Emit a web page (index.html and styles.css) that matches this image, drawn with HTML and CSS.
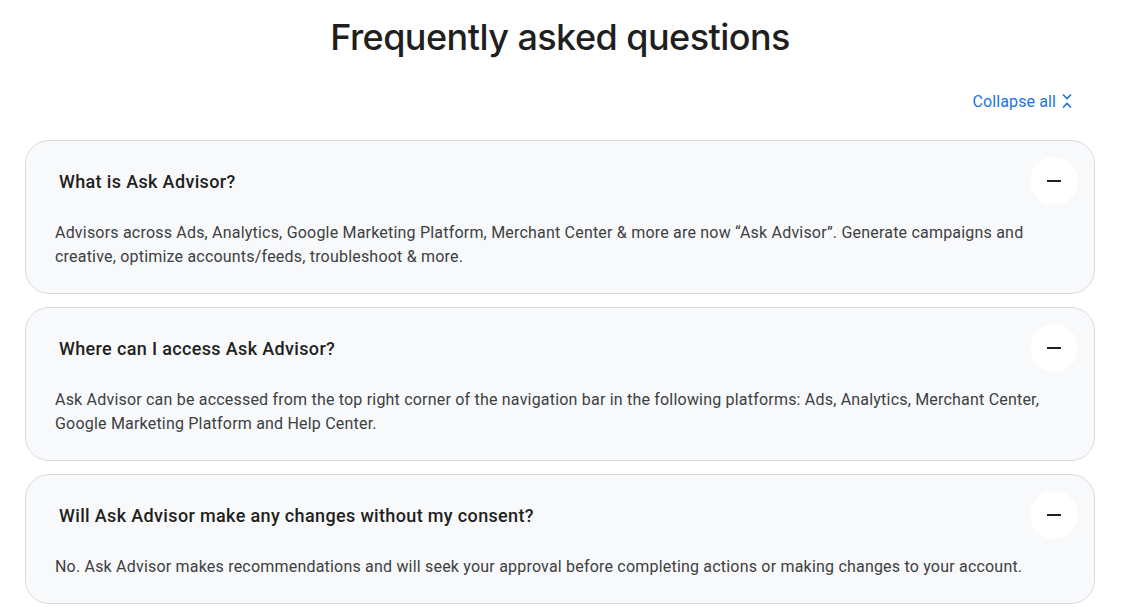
FILE: index.html
```html
<!DOCTYPE html>
<html lang="en">
<head>
    <meta charset="UTF-8">
    <title>Ask Advisor FAQ</title>
    <link rel="stylesheet" href="styles.css">
</head>
<body>
    <section class="faq">
        <h1 class="faq-title">Frequently asked questions</h1>
        <div class="faq-toolbar">
            <button class="collapse-all" type="button">
                Collapse all
                <svg class="collapse-icon" viewBox="0 0 12 18" width="12" height="18" aria-hidden="true">
                    <path d="M2 2.5l4 4 4-4" fill="none" stroke="currentColor" stroke-width="1.6"/>
                    <path d="M2 15.5l4-4 4 4" fill="none" stroke="currentColor" stroke-width="1.6"/>
                </svg>
            </button>
        </div>

        <div class="faq-item">
            <div class="faq-head">
                <h3 class="faq-question">What is Ask Advisor?</h3>
                <button class="faq-toggle" type="button" aria-label="Collapse"><span class="minus"></span></button>
            </div>
            <p class="faq-answer">Advisors across Ads, Analytics, Google Marketing Platform, Merchant Center &amp; more are now “Ask Advisor”. Generate campaigns and creative, optimize accounts/feeds, troubleshoot &amp; more.</p>
        </div>

        <div class="faq-item">
            <div class="faq-head">
                <h3 class="faq-question">Where can I access Ask Advisor?</h3>
                <button class="faq-toggle" type="button" aria-label="Collapse"><span class="minus"></span></button>
            </div>
            <p class="faq-answer">Ask Advisor can be accessed from the top right corner of the navigation bar in the following platforms: Ads, Analytics, Merchant Center, Google Marketing Platform and Help Center.</p>
        </div>

        <div class="faq-item">
            <div class="faq-head">
                <h3 class="faq-question">Will Ask Advisor make any changes without my consent?</h3>
                <button class="faq-toggle" type="button" aria-label="Collapse"><span class="minus"></span></button>
            </div>
            <p class="faq-answer">No. Ask Advisor makes recommendations and will seek your approval before completing actions or making changes to your account.</p>
        </div>
    </section>
</body>
</html>
```
FILE: styles.css
```css
body {
    margin: 0;
    background: #ffffff;
    font-family: Roboto, "Liberation Sans", sans-serif;
    color: #1f1f1f;
}
.faq {
    width: 1070px;
    margin-left: 25px;
}
.faq-title {
    margin: 13px 0 0;
    text-align: center;
    font-family: Inter, Roboto, sans-serif;
    font-size: 36px;
    font-weight: 500;
    line-height: 48px;
    color: #1f1f1f;
    letter-spacing: -0.55px;
}
.faq-toolbar {
    display: flex;
    justify-content: flex-end;
    padding: 27px 22px 0 0;
    height: 26px;
}
.collapse-all {
    display: flex;
    align-items: center;
    gap: 5px;
    border: none;
    background: none;
    padding: 0;
    font-family: Roboto, sans-serif;
    font-size: 16px;
    letter-spacing: 0.1px;
    color: #1a73e8;
    cursor: pointer;
}
.collapse-icon {
    display: block;
}
.faq-item {
    margin-top: 13px;
    background: #f8f9fa;
    border: 1px solid #dadce0;
    border-radius: 24px;
}
.faq-toolbar + .faq-item {
    margin-top: 26px;
}
.faq-head {
    display: flex;
    align-items: center;
    justify-content: space-between;
    padding: 16px 16px 0 33px;
}
.faq-question {
    margin: 0;
    font-size: 18px;
    font-weight: 500;
    letter-spacing: 0.35px;
    color: #1f1f1f;
}
.faq-toggle {
    width: 48px;
    height: 48px;
    border: none;
    border-radius: 50%;
    background: #ffffff;
    display: flex;
    align-items: center;
    justify-content: center;
    cursor: pointer;
}
.minus {
    width: 14px;
    height: 2px;
    background: #1f1f1f;
}
.faq-answer {
    margin: 0;
    padding: 16px 32px 24px 29px;
    font-size: 16px;
    line-height: 24px;
    letter-spacing: 0.2px;
    color: #3c4043;
}
```
